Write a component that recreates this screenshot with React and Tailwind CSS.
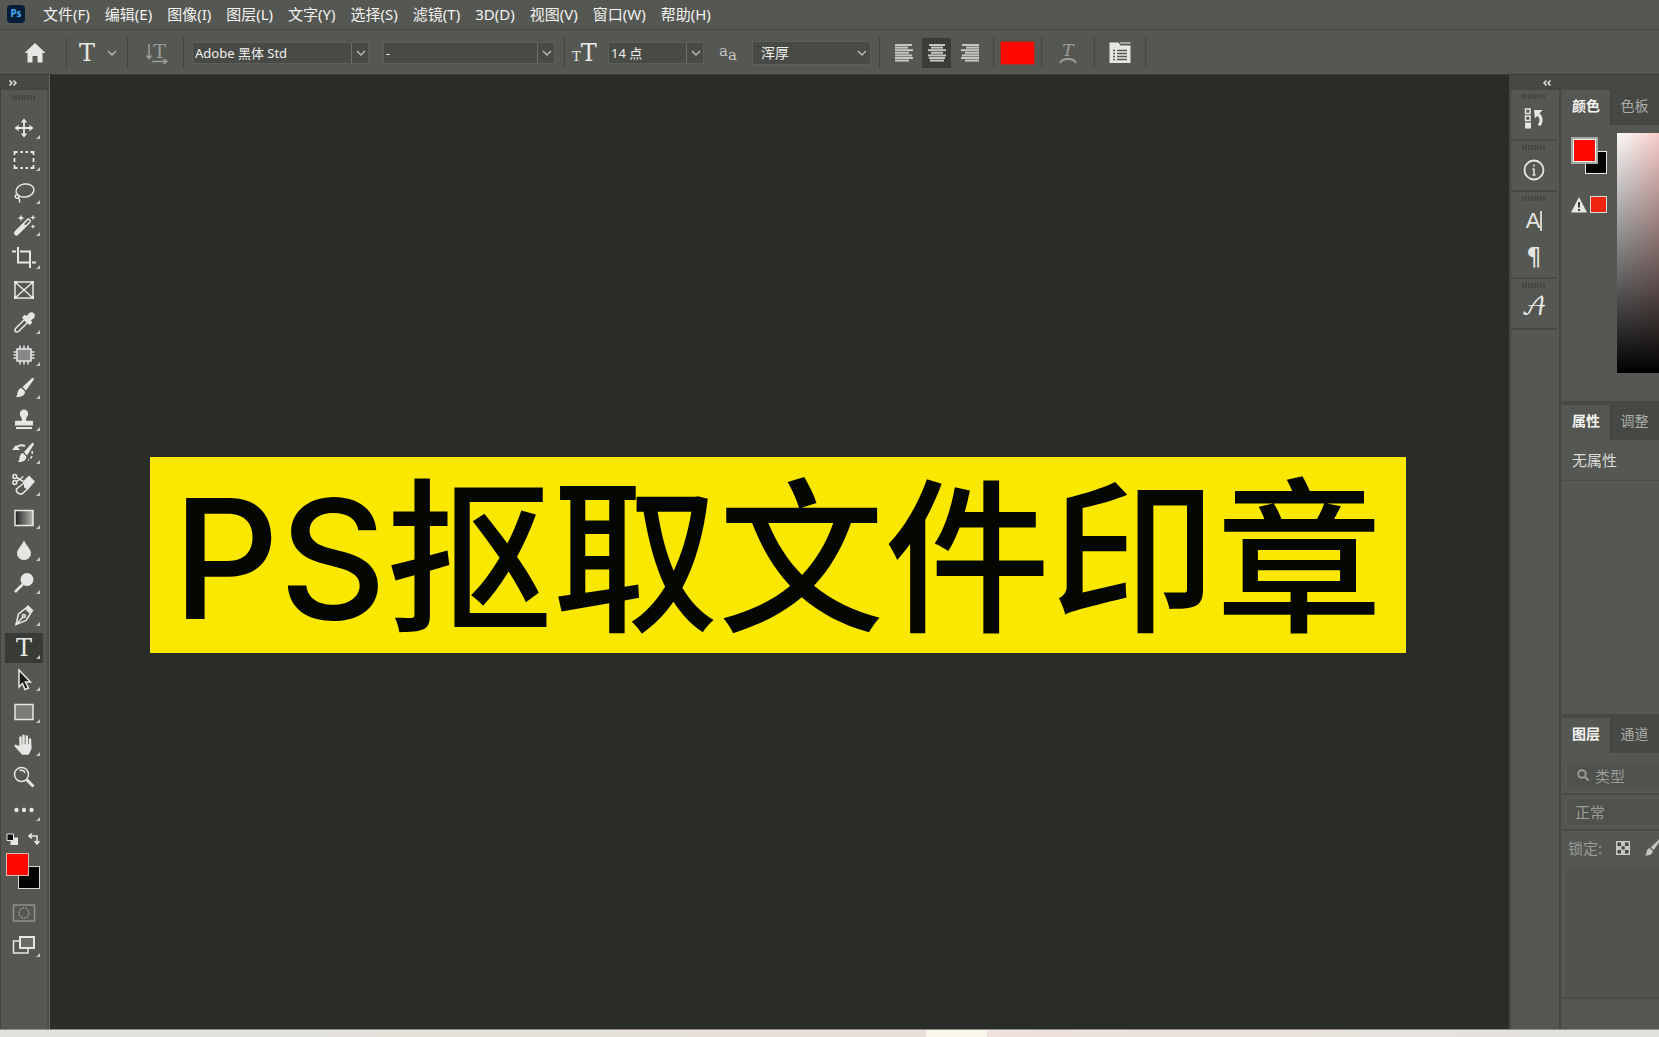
import React from 'react';
import clsx from 'clsx';

const menus = [
  '文件(F)',
  '编辑(E)',
  '图像(I)',
  '图层(L)',
  '文字(Y)',
  '选择(S)',
  '滤镜(T)',
  '3D(D)',
  '视图(V)',
  '窗口(W)',
  '帮助(H)',
];

function Icon({ children, className }) {
  return (
    <svg
      viewBox="0 0 24 24"
      className={clsx('shrink-0', className || 'h-6 w-6')}
      fill="none"
      stroke="currentColor"
      strokeWidth="1.5"
      aria-hidden="true"
    >
      {children}
    </svg>
  );
}

const tools = [
  {
    name: '移动工具',
    icon: (
      <>
        <path d="M12 5v14M5 12h14" strokeWidth="1.800" />
        <path d="M12 2.500l3.200 4H8.800zM12 21.500l3.200-4H8.800zM2.500 12l4-3.200v6.400zM21.500 12l-4-3.200v6.400z" fill="currentColor" stroke="none" />
      </>
    ),
  },
  { name: '矩形选框工具', icon: <path d="M2.500 7V4h3M8.500 4h2.500M13.500 4h2.500M18.500 4h3v3M21.500 10v4M21.500 17v3h-3M16 20h-2.500M11 20H8.500M5.500 20h-3v-3M2.500 14v-4" strokeWidth="1.800" /> },
  {
    name: '套索工具',
    icon: (
      <>
        <ellipse cx="13" cy="9.500" rx="9" ry="6.500" transform="rotate(-10 13 9.500)" />
        <path d="M4.500 13.500c-2 1-1.500 4 .8 3.800 2.400-.3 1.700-3.600-.3-3.300M6 17c1.800.5 2 2.500 1.300 4.500" />
      </>
    ),
  },
  {
    name: '魔棒工具',
    icon: (
      <>
        <path d="M4.500 20L16.500 8" strokeWidth="5" strokeLinecap="round" />
        <path d="M13.500 11L16.500 8" stroke="#555752" strokeWidth="2" strokeLinecap="round" />
        <path d="M9 1.500l.9 2.600 2.600.9-2.600.9L9 8.500l-.9-2.600L5.500 5l2.600-.9zM21 1.500l.8 2.200 2.200.8-2.200.8-.8 2.200-.8-2.200-2.200-.8 2.200-.8zM21 11l.7 1.800 1.800.7-1.800.7-.7 1.800-.7-1.800-1.800-.7 1.800-.7z" fill="currentColor" stroke="none" />
      </>
    ),
  },
  { name: '裁剪工具', icon: <path d="M0 5.500h4M6 1v15.500h12M20 16.500h4M8 5.500h10V22" strokeWidth="2" /> },
  {
    name: '图框工具',
    plain: true,
    icon: (
      <>
        <path d="M3 4h18v16H3zM3 4l18 16M21 4L3 20" />
        <path d="M2 3h3v3H2zM19 3h3v3h-3zM2 18h3v3H2zM19 18h3v3h-3z" fill="currentColor" stroke="none" />
      </>
    ),
  },
  {
    name: '吸管工具',
    icon: (
      <>
        <path d="M3.500 20.500c-1-1-.5-2.500.5-3.500l8.500-8.500 3 3L7 20c-1 1-2.500 1.500-3.500.5z" />
        <path d="M11 6.500l1.800-1.800 2 1.300 2.600-3c1.200-1.400 3-1.200 3.900-.2 1 1 1.100 2.700-.2 3.900l-3 2.600 1.300 2-1.800 1.800z" fill="currentColor" />
      </>
    ),
  },
  {
    name: '修补工具',
    icon: (
      <>
        <path d="M5 6h14v12H5z" fill="#85878a" />
        <path d="M8 2.500V6M12 2.500V6M16 2.500V6M8 18v3.500M12 18v3.500M16 18v3.500M1.500 9H5M1.500 12H5M1.500 15H5M19 9h3.500M19 12h3.500M19 15h3.500" />
      </>
    ),
  },
  {
    name: '画笔工具',
    icon: (
      <path
        d="M21.500 2c.6.600.4 1.300 0 2L14 14.500l-3.500-3.500L19.800 2.300c.6-.5 1.200-.8 1.700-.3zM9.500 12l3.500 3.500c.3 4-4.500 6-9.500 5.500 2-1 1.500-2.500 2-4.500.5-2.300 2-4 4-4.500z"
        fill="currentColor"
        stroke="none"
      />
    ),
  },
  {
    name: '仿制图章工具',
    icon: <path d="M12 1.500a4.200 4.200 0 0 1 4.200 4.200c0 2.500-2.200 3.300-2.200 7h6c.6 0 1 .4 1 1v3.800H3v-3.800c0-.6.4-1 1-1h6c0-3.700-2.200-4.500-2.200-7A4.200 4.200 0 0 1 12 1.500zM4 19h16v2H4z" fill="currentColor" stroke="none" />,
  },
  {
    name: '历史记录画笔工具',
    icon: (
      <>
        <path
          d="M21.500 2c.6.600.4 1.300 0 2L15 14.500l-3-3.500 7.800-8.700c.6-.5 1.200-.8 1.700-.3zM11 12l3.300 3.500c.3 4-3.800 6-8.800 5.500 2-1 1.500-2.500 2-4.500.5-2.300 1.500-4 3.500-4.500zM0 9l4-5 4 5z"
          fill="currentColor"
          stroke="none"
        />
        <path d="M4.500 6.500c2-2.500 5-2.800 8.500-1.500" strokeWidth="2" />
        <path d="M20 10c1 4-.5 8-4 9" strokeDasharray="3 2" />
      </>
    ),
  },
  {
    name: '橡皮擦工具',
    icon: (
      <>
        <path d="M12 8.500l5-5 5 5-6 7-3-1z" fill="currentColor" />
        <path d="M12.500 9.500L4.500 16c-1 3 2.500 6 6 4.500l6-5.500" />
        <circle cx="2.800" cy="3.500" r="1.900" />
        <circle cx="2.800" cy="9.500" r="1.900" />
        <path d="M4.500 4.500l7 4M4.500 8.500l7-5" />
      </>
    ),
  },
  { name: '渐变工具', icon: <path d="M3 4.500h18v15H3z" fill="url(#tool-gradient)" /> },
  { name: '模糊工具', icon: <path d="M12 2c1 4.500 7 8.500 7 13.500A6.700 6.700 0 0 1 12 22a6.700 6.700 0 0 1-7-6.500C5 10.500 11 6.500 12 2z" fill="currentColor" stroke="none" /> },
  {
    name: '减淡工具',
    icon: (
      <>
        <circle cx="15" cy="8.500" r="6.500" fill="currentColor" stroke="none" />
        <path d="M11 13l-8 8" strokeWidth="2.500" />
      </>
    ),
  },
  {
    name: '钢笔工具',
    icon: (
      <>
        <path d="M4 21.500L6.500 11l7-5.500 5 5-4.500 7z" />
        <path d="M4 21.500l7-7.500" />
        <circle cx="11.800" cy="13" r="1.500" />
        <path d="M13.500 4.500l2.500-2.500 5.500 5.500-2.500 3z" fill="currentColor" stroke="none" />
      </>
    ),
  },
  { name: '横排文字工具', text: 'T', active: true },
  { name: '路径选择工具', icon: <path d="M7 2l11.500 12h-5l3 6-3.500 1.500-2.500-6L7 19z" fill="#1c1d1a" /> },
  { name: '矩形工具', icon: <path d="M3 4.500h18v15H3z" fill="#7a7c78" /> },
  {
    name: '抓手工具',
    icon: (
      <path
        d="M8.500 12V4.500M11.500 11V2.800M14.800 11V3.500M18 12.500V6.500M8.500 12.500h9.800v3L16 20.500h-5.500L8 17.500 3.800 12.800"
        fill="currentColor"
        strokeWidth="2.500"
        strokeLinecap="round"
        strokeLinejoin="round"
      />
    ),
  },
  {
    name: '缩放工具',
    plain: true,
    icon: (
      <>
        <circle cx="9.500" cy="9.500" r="7" />
        <path d="M7.500 5.500c2.500-1 4.800.2 5.500 2.500" />
        <path d="M14.500 14.500l7 7" strokeWidth="3" />
      </>
    ),
  },
  {
    name: '编辑工具栏',
    icon: (
      <>
        <circle cx="4.500" cy="12" r="2.200" fill="currentColor" stroke="none" />
        <circle cx="12" cy="12" r="2.200" fill="currentColor" stroke="none" />
        <circle cx="19.500" cy="12" r="2.200" fill="currentColor" stroke="none" />
      </>
    ),
  },
];

function Divider() {
  return <span className="h-8 w-px shrink-0 bg-[#444641]" />;
}

function Chevron({ className }) {
  return (
    <svg viewBox="0 0 10 10" className={clsx('h-[10px] w-[10px]', className)} fill="none" stroke="currentColor" strokeWidth="1.500" aria-hidden="true">
      <path d="M1 3l4 4 4-4" />
    </svg>
  );
}

function Combo({ label, value, width, split = true }) {
  return (
    <div className={clsx('relative shrink-0', width)}>
      <select
        aria-label={label}
        className={clsx(
          'block w-full appearance-none border border-[#5c5e59] bg-[#484a46] text-[#f0f0ee] outline-none',
          split ? 'h-[22px] pl-[2px] text-[13px] leading-5' : 'h-6 pl-2 text-[14px] leading-[22px]'
        )}
      >
        <option>{value}</option>
      </select>
      <span
        className={clsx(
          'pointer-events-none absolute inset-y-px right-0 flex w-[18px] items-center justify-center text-[#b5b7b2]',
          split && 'border-l border-[#6d6f6a]'
        )}
      >
        <Chevron />
      </span>
    </div>
  );
}

function AlignIcon({ rows }) {
  return (
    <svg viewBox="0 0 18 18" className="h-[18px] w-[18px]" fill="#c4c6c1" aria-hidden="true">
      {rows.map(([x, w], i) => (
        <rect key={i} x={x} y={i * 2.6} width={w} height="2" />
      ))}
    </svg>
  );
}

const aligns = [
  { name: '左对齐文本', rows: [[0, 17], [0, 13], [0, 18], [0, 14], [0, 17], [0, 18], [0, 14]] },
  { name: '居中对齐文本', active: true, rows: [[1, 16], [3, 12], [0, 18], [3, 12], [0, 18], [1, 16], [2, 14]] },
  { name: '右对齐文本', rows: [[1, 17], [5, 13], [0, 18], [4, 14], [1, 17], [0, 18], [4, 14]] },
];

function Grip() {
  return (
    <svg viewBox="0 0 24 5" className="h-[5px] w-6" aria-hidden="true">
      <path d="M1 0v5M4 0v5M7 0v5M10 0v5M13 0v5M16 0v5M19 0v5M22 0v5" stroke="#41433f" strokeWidth="1.500" />
    </svg>
  );
}

function MenuBar() {
  return (
    <header className="flex h-[30px] shrink-0 items-center border-b border-[#454742] pb-[2px] pl-[7px]">
      <span className="mr-[18px] flex h-[18px] w-[18px] items-center justify-center rounded bg-[#051d36] text-[10px] font-bold text-[#4aaef5]">Ps</span>
      <nav className="flex gap-[15px] text-[15px] leading-6 text-[#f2f2f0]">
        {menus.map((m) => (
          <button key={m} type="button" className="whitespace-nowrap">
            {m}
          </button>
        ))}
      </nav>
    </header>
  );
}

function OptionsBar() {
  return (
    <div className="flex h-[45px] shrink-0 items-center border-b border-[#3a3c38] pt-[2px] text-[#e6e7e4]">
      <button type="button" aria-label="主页" className="ml-[23px] mr-[19px]">
        <Icon>
          <path d="M12 2L1.500 12H4.500v9.500h5V15h5v6.500h5V12h3z" fill="currentColor" stroke="none" />
        </Icon>
      </button>
      <Divider />
      <button type="button" aria-label="文字工具预设" className="ml-3 mr-[10px] flex items-center gap-3">
        <span className="font-['DejaVu_Serif'] text-[24px] leading-6">T</span>
        <Chevron className="text-[#b5b7b2]" />
      </button>
      <Divider />
      <button type="button" aria-label="切换文本取向" className="ml-[17px] mr-[14px] text-[#9c9e99]">
        <Icon>
          <path d="M4 3v14M1.500 14.500L4 17.500l2.500-3M7 20.500h14M18.500 18l3.500 2.500-3.500 2.500" />
          <text x="14.500" y="17" textAnchor="middle" fontFamily="DejaVu Serif" fontSize="19" fill="currentColor" stroke="none">
            T
          </text>
        </Icon>
      </button>
      <Divider />
      <div className="ml-2 flex gap-[14px]">
        <Combo label="字体" value="Adobe 黑体 Std" width="w-[177px]" />
        <Combo label="字体样式" value="-" width="w-[172px]" />
      </div>
      <span className="w-[9px] shrink-0" />
      <Divider />
      <span className="ml-[7px] mr-[11px] flex w-[25px] shrink-0 items-baseline pt-1 font-['DejaVu_Serif'] leading-6">
        <span className="text-[13px]">T</span>
        <span className="text-[24px]">T</span>
      </span>
      <Combo label="字号" value="14 点" width="w-[96px]" />
      <span className="ml-[15px] mr-[13px] flex w-5 shrink-0 text-[#c4c6c1]">
        <span className="font-['DejaVu_Serif'] text-[15px] leading-4">a</span>
        <span className="pt-1 font-['DejaVu_Serif'] text-[15px] leading-4">a</span>
      </span>
      <Combo label="消除锯齿" value="浑厚" width="w-[119px]" split={false} />
      <span className="w-2 shrink-0" />
      <Divider />
      <div className="mx-[9px] flex gap-1">
        {aligns.map((a) => (
          <button
            key={a.name}
            type="button"
            aria-label={a.name}
            className={clsx('flex h-[30px] w-[29px] items-center justify-center', a.active && 'bg-[#3a3c38]')}
          >
            <AlignIcon rows={a.rows} />
          </button>
        ))}
      </div>
      <Divider />
      <button type="button" aria-label="文本颜色" className="mx-[6px] h-6 w-[35px] border border-[#8b3a30] bg-[#fe0800]" />
      <Divider />
      <button type="button" aria-label="变形文字" className="mx-[14px] text-[#9c9e99]">
        <Icon>
          <text x="12" y="15" textAnchor="middle" fontFamily="DejaVu Serif" fontSize="17" fontStyle="italic" fill="currentColor" stroke="none">
            T
          </text>
          <path d="M4 22c2-5.500 14-5.500 16 0" strokeWidth="2" />
        </Icon>
      </button>
      <Divider />
      <button type="button" aria-label="切换字符和段落面板" className="mx-[13px]">
        <Icon>
          <path d="M1.500 1.500h9l2 3h10V22h-21z" fill="currentColor" stroke="none" />
          <path d="M12 2h10.500" stroke="#a3a5a0" strokeWidth="2" />
          <path d="M5 9.500h2M9 9.500h10M5 12.500h2M9 12.500h10M5 15.500h2M9 15.500h10M5 18.500h2M9 18.500h10" stroke="#555752" />
        </Icon>
      </button>
      <Divider />
    </div>
  );
}

function Toolbar() {
  return (
    <aside className="flex w-[50px] shrink-0 flex-col border-x border-[#42443f] border-r-[#656762]">
      <div className="flex h-[15px] shrink-0 items-center bg-[#454743] pl-2">
        <button type="button" aria-label="展开工具栏" className="text-[#e6e7e4]">
          <svg viewBox="0 0 8 6" className="h-[6px] w-2" fill="none" stroke="currentColor" strokeWidth="1.500">
            <path d="M.5.500L3 3 .5 5.500M4.500.500L7 3 4.500 5.500" />
          </svg>
        </button>
      </div>
      <div className="flex flex-1 flex-col border-r-2 border-[#4a4c47]">
        <div className="flex h-[23px] shrink-0 justify-center pt-[5px]">
          <Grip />
        </div>
        <div className="flex h-[712px] shrink-0 flex-col items-center justify-between">
          {tools.map((t) => (
            <button
              key={t.name}
              type="button"
              aria-label={t.name}
              className={clsx('relative flex h-[30px] w-[38px] items-center justify-center text-[#e6e7e4]', t.active && 'bg-[#383a36]')}
            >
              {t.text ? <span className="font-['DejaVu_Serif'] text-[24px] leading-6">{t.text}</span> : <Icon>{t.icon}</Icon>}
              {!t.plain && (
                <svg viewBox="0 0 4 4" className="absolute bottom-1 right-[3px] h-1 w-1" fill="#c4c6c1">
                  <path d="M4 0v4H0z" />
                </svg>
              )}
            </button>
          ))}
        </div>
        <div className="flex h-7 shrink-0 items-center justify-between pl-[5px] pr-[7px] text-[#e6e7e4]">
          <button type="button" aria-label="默认前景色和背景色">
            <svg viewBox="0 0 12 12" className="h-3 w-3">
              <path d="M4.500 4.500H12V12H4.500z" fill="currentColor" />
              <path d="M1 1h6.500v6.500H1z" fill="#111" stroke="currentColor" />
            </svg>
          </button>
          <button type="button" aria-label="切换前景色和背景色">
            <svg viewBox="0 0 12 12" className="h-3 w-3" fill="none" stroke="currentColor" strokeWidth="1.500">
              <path d="M2 3h7v7M4 .5L1 3l3 2.500M6.500 8L9 11l2.500-3" />
            </svg>
          </button>
        </div>
        <div className="relative ml-[5px] h-9 w-[34px] shrink-0">
          <button type="button" aria-label="背景色" className="absolute bottom-0 right-0 h-[23px] w-[22px] border border-[#d9dad6] bg-[#020402]" />
          <button type="button" aria-label="前景色" className="absolute left-0 top-0 h-[23px] w-[23px] border border-[#e0b9b2] bg-[#fe0800]" />
        </div>
        <div className="mt-3 flex shrink-0 flex-col items-center gap-2">
          <button type="button" aria-label="以快速蒙版模式编辑" className="text-[#8f918c]">
            <Icon>
              <path d="M1.500 4h21v16h-21z" />
              <circle cx="12" cy="12" r="5" strokeDasharray="2 1" />
            </Icon>
          </button>
          <button type="button" aria-label="更改屏幕模式" className="relative text-[#e6e7e4]">
            <Icon>
              <path d="M8 8H1.500v12H16v-4" />
              <path d="M8 4h14v11H8z" fill="#6a6c67" strokeWidth="2" />
            </Icon>
            <svg viewBox="0 0 4 4" className="absolute -right-1 bottom-0 h-1 w-1" fill="#c4c6c1">
              <path d="M4 0v4H0z" />
            </svg>
          </button>
        </div>
      </div>
    </aside>
  );
}

function DockSection({ children }) {
  return <div className="flex flex-col items-center gap-1 border-b-2 border-[#464843] py-1">{children}</div>;
}

function DockButton({ label, children }) {
  return (
    <button type="button" aria-label={label} className="flex h-8 w-9 items-center justify-center text-[#e6e7e4]">
      {children}
    </button>
  );
}

function IconDock() {
  return (
    <div className="w-[50px] shrink-0 border-r-2 border-[#464843] pr-[2px]">
      <DockSection>
        <Grip />
        <DockButton label="历史记录">
          <Icon>
            <path d="M3.500 2h4.500v4.500H3.500zM3.500 9h4.500v4.500H3.500z" />
            <path d="M3 15.500h6V21.500H3z" fill="currentColor" stroke="none" />
            <path d="M14.500 7c5 1.500 6 6.500 2.500 11.500" strokeWidth="3" />
            <path d="M12 3h8.500L13 11.500z" fill="currentColor" stroke="none" />
          </Icon>
        </DockButton>
      </DockSection>
      <DockSection>
        <Grip />
        <DockButton label="信息">
          <Icon>
            <circle cx="12" cy="12" r="9.500" strokeWidth="1.800" />
            <path d="M12 10.500v6.500M12 6.500v2M10.500 11h1.500M10.500 17h3" />
          </Icon>
        </DockButton>
      </DockSection>
      <DockSection>
        <Grip />
        <DockButton label="字符">
          <span className="border-r-2 border-[#d0d2cd] font-['Liberation_Sans'] text-[22px] leading-5">A</span>
        </DockButton>
        <DockButton label="段落">
          <span className="font-['DejaVu_Sans'] text-[24px] leading-6">¶</span>
        </DockButton>
      </DockSection>
      <DockSection>
        <Grip />
        <DockButton label="字形">
          <span className="font-['DejaVu_Math_TeX_Gyre','DejaVu_Serif',serif] text-[24px] leading-7">𝒜</span>
        </DockButton>
      </DockSection>
    </div>
  );
}

function Tabs({ items }) {
  return (
    <div role="tablist" className="flex h-[35px] shrink-0 text-[14px]">
      {items.map((name, i) => (
        <button
          key={name}
          type="button"
          role="tab"
          aria-selected={i === 0}
          className={clsx(
            'w-12 shrink-0 whitespace-nowrap pb-1',
            i === 0 ? 'font-bold text-[#f5f5f3]' : 'border-l border-[#3e403c] bg-[#464843] text-[#aaaca7]'
          )}
        >
          {name}
        </button>
      ))}
      <span className="flex-1 bg-[#464843]" />
    </div>
  );
}

function Panels() {
  return (
    <div className="flex min-w-0 flex-1 flex-col overflow-hidden border-l border-[#50524d]">
      <section className="h-[311px] shrink-0">
        <Tabs items={['颜色', '色板']} />
        <div className="flex gap-[10px] pl-[9px] pt-2">
          <div className="w-9 shrink-0 pt-1">
            <div className="relative h-[37px] w-9">
              <button type="button" aria-label="背景色" className="absolute bottom-0 right-0 h-[23px] w-[22px] border border-[#e6e7e4] bg-[#020402]" />
              <button type="button" aria-label="前景色" className="absolute left-0 top-0 h-[27px] w-[27px] border-2 border-[#a9aba6] bg-[#fe0800] ring-1 ring-inset ring-[#f4f4f2]" />
            </div>
            <div className="mt-[22px] flex items-center justify-between">
              <svg viewBox="0 0 16 16" className="h-4 w-4" fill="#e6e7e4" aria-hidden="true">
                <path d="M8 0l8 15.500H0z" />
                <path d="M7 5h2v5.500H7zM7 12h2v2H7z" fill="#3c3e3a" />
              </svg>
              <button type="button" aria-label="选择打印色域内颜色" className="h-[17px] w-[17px] border border-[#dcdcd8] bg-[#ec2410]" />
            </div>
          </div>
          <div className="h-[240px] min-w-0 flex-1 bg-[linear-gradient(to_bottom,transparent,#000),linear-gradient(to_right,#fbfbfa,#f7cbc8)]" />
        </div>
      </section>
      <section className="h-[313px] shrink-0 border-t-4 border-[#464843]">
        <Tabs items={['属性', '调整']} />
        <p className="border-b border-[#4a4c47] py-[9px] pl-[10px] text-[15px] leading-[22px] text-[#dcdcd9]">无属性</p>
      </section>
      <section className="flex flex-1 flex-col border-t-4 border-[#464843] text-[15px] text-[#999b96]">
        <Tabs items={['图层', '通道']} />
        <div className="border-b-2 border-[#484a45] pb-[6px] pl-1 pt-[10px]">
          <div className="flex h-6 items-center gap-[6px] border-l border-[#60625d] bg-[#4f514c] pl-[10px]">
            <svg viewBox="0 0 12 12" className="h-3 w-3 shrink-0" fill="none" stroke="currentColor" strokeWidth="2" aria-hidden="true">
              <circle cx="5" cy="5" r="3.800" />
              <path d="M8 8l3.500 3.500" />
            </svg>
            <input aria-label="图层过滤" defaultValue="类型" className="h-6 w-0 min-w-0 flex-1 bg-transparent outline-none" />
          </div>
        </div>
        <div className="border-b-2 border-[#484a45] py-1 pl-1">
          <select aria-label="混合模式" className="block h-[26px] w-full appearance-none border-l border-[#60625d] bg-[#4f514c] pl-2 outline-none">
            <option>正常</option>
          </select>
        </div>
        <div className="flex h-[38px] shrink-0 items-center overflow-hidden pb-1 pl-[6px]">
          <span className="w-12 shrink-0 whitespace-nowrap">锁定:</span>
          <button type="button" aria-label="锁定透明像素" className="shrink-0">
            <svg viewBox="0 0 14 14" className="h-[14px] w-[14px]" fill="#454743">
              <path d="M0 0h14v14H0z" fill="#c4c6c1" />
              <path d="M1.500 1.500h3.500v3.500H1.500zM9 1.500h3.500v3.500H9zM5.500 5.300h3.200v3.200H5.500zM1.500 9h3.500v3.500H1.500zM9 9h3.500v3.500H9z" />
            </svg>
          </button>
          <button type="button" aria-label="锁定图像像素" className="ml-3 shrink-0 text-[#c4c6c1]">
            <Icon className="h-5 w-5">{tools[8].icon}</Icon>
          </button>
        </div>
        <div className="ml-1 flex-1 bg-[#50524d]" />
        <div className="h-8 shrink-0 border-t-2 border-[#484a45]" />
      </section>
    </div>
  );
}

export default function App() {
  return (
    <div className="flex h-screen flex-col overflow-hidden bg-[#555752] font-['Noto_Sans','Noto_Sans_CJK_SC',sans-serif]">
      <svg className="absolute h-0 w-0" aria-hidden="true">
        <defs>
          <linearGradient id="tool-gradient">
            <stop offset="0" stopColor="#20211f" />
            <stop offset="1" stopColor="#b4b6b1" />
          </linearGradient>
        </defs>
      </svg>
      <MenuBar />
      <OptionsBar />
      <div className="flex min-h-0 flex-1">
        <Toolbar />
        <main className="flex min-w-0 flex-1 items-center justify-center bg-[#2a2c28] pr-1 pt-[6px]">
          <h1 className="flex h-[196px] w-[1256px] items-center justify-center whitespace-nowrap bg-[#fae800] pt-2 font-['Inter','Noto_Sans_CJK_SC',sans-serif] text-[166px] font-medium leading-[180px] text-[#040601]">
            PS抠取文件印章
          </h1>
        </main>
        <aside className="flex w-[150px] shrink-0 flex-col border-l-2 border-[#454743]">
          <div className="flex h-[15px] shrink-0 items-center bg-[#454743] pl-8">
            <button type="button" aria-label="展开面板" className="text-[#e6e7e4]">
              <svg viewBox="0 0 8 6" className="h-[6px] w-2" fill="none" stroke="currentColor" strokeWidth="1.500">
                <path d="M3.500.500L1 3l2.500 2.500M7.500.500L5 3l2.500 2.500" />
              </svg>
            </button>
          </div>
          <div className="flex min-h-0 flex-1">
            <IconDock />
            <Panels />
          </div>
        </aside>
      </div>
      <footer className="flex h-2 shrink-0 border-t border-[#8d8f89] bg-[#e1e0dc]">
        <span className="flex-1 bg-linear-to-r from-[#e1e2dd] to-[#e8e0d8]" />
        <span className="w-[61px] bg-[#f8f7ea]" />
        <span className="w-[672px] bg-linear-to-r from-[#efe1dc] to-[#e1e2dd]" />
      </footer>
    </div>
  );
}
